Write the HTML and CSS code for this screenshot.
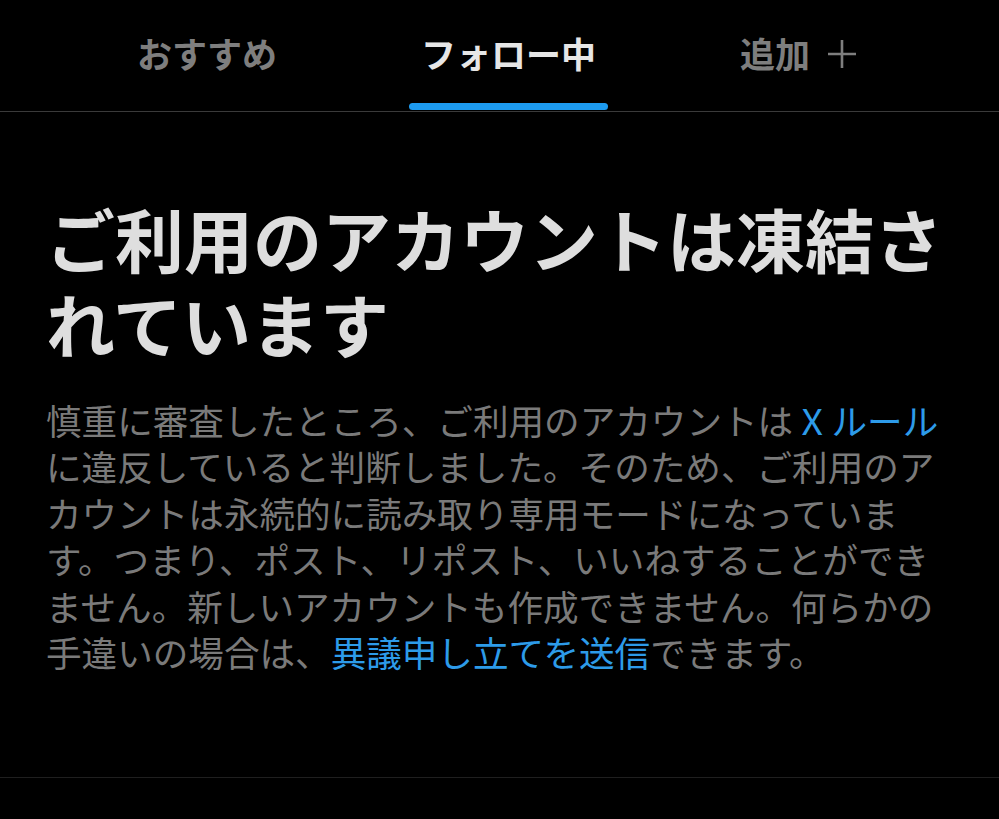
FILE: index.html
```html
<!DOCTYPE html>
<html lang="ja">
<head>
<meta charset="utf-8">
<title>フォロー中</title>
<link rel="stylesheet" href="styles.css">
</head>
<body>
<nav class="tabs">
  <div class="tab">おすすめ</div>
  <div class="tab active">フォロー中</div>
  <div class="tab">追加<svg class="plus" viewBox="0 0 30 30" width="30" height="30" aria-hidden="true"><path d="M15 1V29M1 15H29" stroke="currentColor" stroke-width="2.6" fill="none"/></svg></div>
</nav>
<main class="notice">
  <h1 class="title">ご利用のアカウントは凍結されています</h1>
  <p class="body">慎重に審査したところ、ご利用のアカウントは<a class="link link-rules" href="#"><span class="x-mark">X</span>ルール</a>に違反していると判断しました。そのため、ご利用のアカウントは永続的に読み取り専用モードになっています。つまり、ポスト、リポスト、いいねすることができません。新しいアカウントも作成できません。何らかの手違いの場合は、<a class="link" href="#">異議申し立てを送信</a>できます。</p>
</main>
</body>
</html>
```

FILE: styles.css
```css
html, body {
  margin: 0;
  padding: 0;
  background: #000;
  height: 100%;
}
body {
  font-family: "Noto Sans CJK JP", "Noto Sans", sans-serif;
  color: #e2e2e2;
  overflow: hidden;
}
.tabs {
  display: flex;
  align-items: stretch;
  gap: 120px;
  padding-left: 125px;
  height: 111px;
  border-bottom: 1px solid #3a3a3a;
}
.tab {
  position: relative;
  display: flex;
  align-items: center;
  padding: 0 12px 6px;
  font-size: 35px;
  font-weight: 700;
  color: #7e7e7e;
  line-height: 1;
  white-space: nowrap;
}
.tab.active {
  color: #e6e6e6;
}
.tab.active::after {
  content: "";
  position: absolute;
  left: 0;
  right: 0;
  bottom: 1px;
  height: 7px;
  border-radius: 4px;
  background: #1d9bf0;
}
.plus {
  display: block;
  margin-left: 17px;
  margin-top: 3px;
}
.notice {
  padding: 84px 46px 102px;
  border-bottom: 1px solid #1f1f1f;
}
.title {
  margin: 0;
  font-size: 69px;
  line-height: 85px;
  font-weight: 700;
  color: #dedede;
}
.body {
  margin: 31px 0 0;
  font-size: 35.6px;
  line-height: 46.4px;
  color: #7a7a7a;
  font-weight: 400;
}
.link {
  color: #2d9be9;
  text-decoration: none;
}
.x-mark {
  display: inline-block;
  margin: 0 9px 0 9px;
  transform: scaleX(1.05);
}
```
